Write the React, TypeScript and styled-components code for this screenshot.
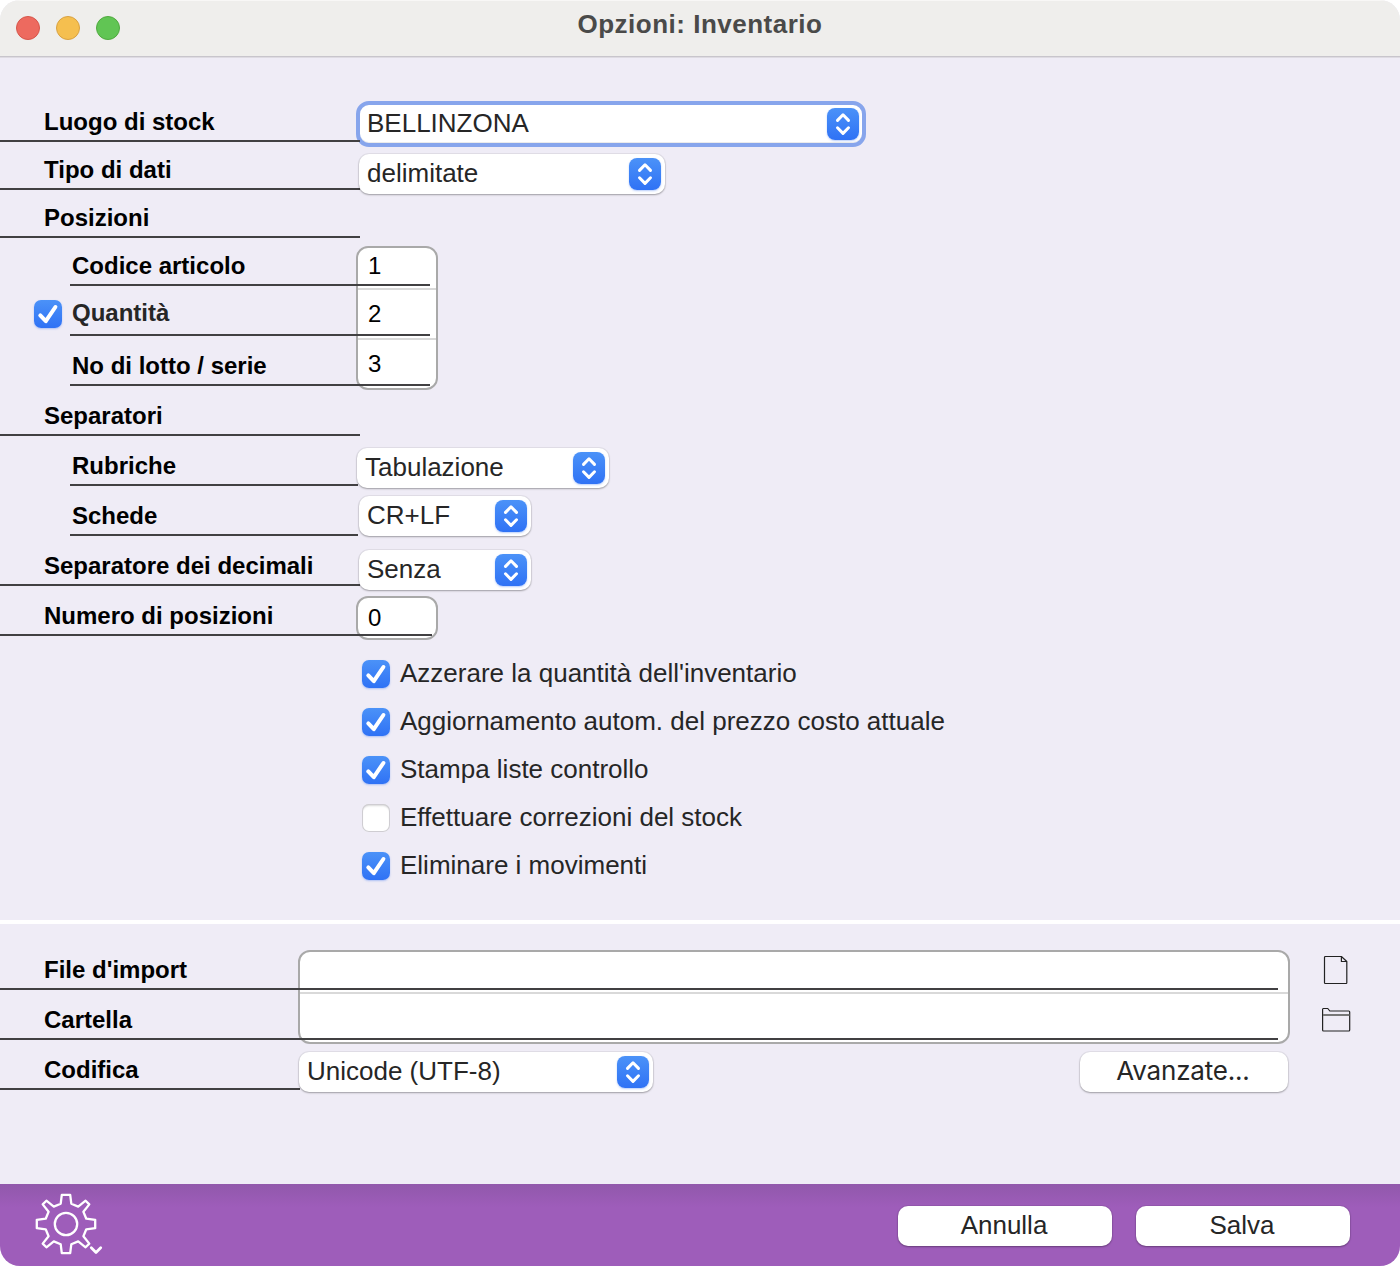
import React, { useState } from "react";
import styled, { createGlobalStyle, css } from "styled-components";

const sans = `"Liberation Sans", Arial, Helvetica, sans-serif`;
const system = `"Inter", "Liberation Sans", sans-serif`;
const line = "#414042";

const GlobalStyle = createGlobalStyle`
  *, *::before, *::after { box-sizing: border-box; }
  body { margin: 0; background: #fff; }
`;

const Window = styled.main`
  display: flex;
  flex-direction: column;
  width: 1400px;
  height: 1266px;
  border-radius: 20px;
  overflow: hidden;
  background: #efecf6;
  color: #262626;
  font-family: ${sans};
  font-size: 26px;
`;

const TitleBar = styled.header`
  display: grid;
  grid-template-columns: 140px 1fr 140px;
  flex: none;
  height: 58px;
  background: #efeeec;
  border-bottom: 1px solid #dedbe2;
  box-shadow: inset 0 1px 0 #f8f7f6, inset 0 -1px 0 #c8c5cc;
`;

const Lights = styled.div`
  display: flex;
  gap: 16px;
  padding: 16px 0 0 16px;
`;

const Light = styled.span<{ $fill: string; $edge: string }>`
  width: 24px;
  height: 24px;
  border-radius: 50%;
  background: ${(p) => p.$fill};
  border: 1px solid ${(p) => p.$edge};
`;

const Title = styled.h1`
  margin: 0;
  padding-top: 8px;
  text-align: center;
  font: 700 26px/32px ${sans};
  letter-spacing: 0.5px;
  color: #4a4a49;
`;

const Section = styled.section<{ $height: number; $labels: number }>`
  display: grid;
  grid-template-columns: ${(p) => p.$labels}px 1fr;
  flex: none;
  height: ${(p) => p.$height}px;
`;

const Labels = styled.div<{ $top: number }>`
  display: flex;
  flex-direction: column;
  padding-top: ${(p) => p.$top}px;
`;

/* The rule under a label may run on across the field beside it. */
const LabelRow = styled.div<{ $h: number; $indent?: boolean; $end: number; $lift?: number }>`
  position: relative;
  z-index: 1;
  display: flex;
  align-items: flex-end;
  flex: none;
  height: ${(p) => p.$h}px;
  padding: 0 0 ${(p) => 8 + (p.$lift ?? 0)}px ${(p) => (p.$indent ? 72 : 44)}px;
  font-weight: 700;
  font-size: 24px;
  line-height: 24px;
  color: ${(p) => (p.$lift ? "#262626" : "#000")};
  white-space: nowrap;
  pointer-events: none;

  &::after {
    content: "";
    position: absolute;
    bottom: 0;
    left: ${(p) => (p.$indent ? 70 : 0)}px;
    width: ${(p) => p.$end - (p.$indent ? 70 : 0)}px;
    height: 2px;
    background: ${line};
  }
`;

const CheckedLabel = styled.div`
  display: flex;
  align-items: flex-end;
  gap: 10px;
  margin-left: -38px;
  pointer-events: auto;

  & > button { margin: -1px 0 -3px; }
`;

const Controls = styled.div<{ $top: number }>`
  display: flex;
  flex-direction: column;
  align-items: flex-start;
  padding-top: ${(p) => p.$top}px;
`;

const raised = css`
  border: 0;
  border-radius: 10px;
  background: #fff;
  box-shadow: 0 0 0 1px rgba(0, 0, 0, 0.05), 0 1px 2px rgba(0, 0, 0, 0.3);
  color: #262626;
`;

const Popup = styled.button<{ $w: number; $gap?: number; $inset?: number; $focus?: boolean }>`
  ${raised}
  position: relative;
  z-index: 2;
  display: flex;
  align-items: center;
  justify-content: space-between;
  flex: none;
  width: ${(p) => p.$w}px;
  height: 40px;
  margin: ${(p) => p.$gap ?? 0}px 0 0 ${(p) => p.$inset ?? 0}px;
  padding: 0 4px 0 8px;
  font: 26px/38px ${sans};
  text-align: left;
  outline: none;
  ${(p) =>
    p.$focus &&
    css`
      z-index: 0;
      height: 46px;
      padding: 0 3px 0 7px;
      border: 4px solid #87a5ec;
      border-radius: 13px;
      box-shadow: inset 0 -1px 0 rgba(0, 0, 0, 0.08);
    `}
`;

const PopupText = styled.span`
  height: 40px;
`;

const Stepper = styled.span`
  display: grid;
  place-items: center;
  width: 32px;
  height: 32px;
  border-radius: 8px;
  background: linear-gradient(#4b92f8, #2f72f5);
  box-shadow: 0 1px 2px rgba(50, 110, 240, 0.35);
`;

const FieldGroup = styled.div<{ $w: number; $gap?: number }>`
  display: flex;
  flex-direction: column;
  flex: none;
  width: ${(p) => p.$w}px;
  margin-top: ${(p) => p.$gap ?? 0}px;
  border: 2px solid #a9a9a9;
  border-radius: 12px;
  background: #fff;
  overflow: hidden;
`;

const Field = styled.input<{ $h: number; $pad: number }>`
  width: 100%;
  height: ${(p) => p.$h}px;
  border: 0;
  padding: 0 10px ${(p) => p.$pad}px;
  background: transparent;
  font: 24px/28px ${sans};
  color: #000;
  outline: none;

  & + & { border-top: 2px solid #d9d9d9; }
`;

const CheckList = styled.div`
  display: flex;
  flex-direction: column;
  gap: 20px;
  margin: 20px 0 0 6px;
`;

const CheckRow = styled.label`
  display: flex;
  align-items: center;
  gap: 10px;
  height: 28px;
  white-space: nowrap;
`;

const CheckText = styled.span`
  height: 30px;
  line-height: 28px;
`;

const Box = styled.button<{ $on: boolean }>`
  display: grid;
  place-items: center;
  flex: none;
  width: 28px;
  height: 28px;
  padding: 0;
  border: 0;
  border-radius: 7px;
  background: ${(p) => (p.$on ? "linear-gradient(#4b92f8, #2f72f5)" : "#fff")};
  box-shadow: ${(p) =>
    p.$on
      ? "0 1px 2px rgba(50, 110, 240, 0.35)"
      : "inset 0 0 0 1px #cfcdd2, inset 0 2px 2px rgba(0, 0, 0, 0.15)"};
`;

const Divider = styled.div`
  flex: none;
  height: 4px;
  background: #fff;
`;

const ImportControls = styled.div`
  display: grid;
  grid-template-columns: 992px 1fr;
  align-content: start;
  padding-top: 26px;
`;

const FileButtons = styled.div`
  display: flex;
  flex-direction: column;
  align-items: center;
  gap: 22px;
  width: 92px;
  padding-top: 5px;
`;

const IconButton = styled.button`
  display: block;
  width: 32px;
  height: 30px;
  padding: 0;
  border: 0;
  background: none;

  svg { display: block; }
`;

const EncodingRow = styled.div`
  display: flex;
  justify-content: space-between;
  padding: 8px 2px 0 1px;
`;

const PushButton = styled.button<{ $w: number; $system?: boolean }>`
  ${raised}
  width: ${(p) => p.$w}px;
  height: 40px;
  padding: 0 0 2px;
  font: 26px/38px ${(p) => (p.$system ? system : sans)};
  letter-spacing: ${(p) => (p.$system ? "-0.2px" : "0")};
  text-indent: -2px;
`;

const Footer = styled.footer`
  display: flex;
  align-items: flex-start;
  gap: 24px;
  height: 82px;
  margin-top: auto;
  padding: 22px 50px 0 36px;
  background: linear-gradient(#9158ab, #9c5cb8 20px, #9e5dba 24px);
`;

const GearButton = styled.button`
  height: 62px;
  margin: -13px auto 0 -1px;
  padding: 0;
  border: 0;
  background: none;
`;

const Arrows = () => (
  <Stepper>
    <svg width="32" height="32" viewBox="0 0 32 32" fill="none" stroke="#fff" strokeWidth="3" strokeLinecap="round" strokeLinejoin="round">
      <path d="M10.5 12.4 16 6.8l5.5 5.6M10.5 19.8l5.5 5.6 5.5-5.6" />
    </svg>
  </Stepper>
);

function Select(props: { value: string; w: number; gap?: number; inset?: number; focus?: boolean }) {
  return (
    <Popup type="button" $w={props.w} $gap={props.gap} $inset={props.inset} $focus={props.focus}>
      <PopupText>{props.value}</PopupText>
      <Arrows />
    </Popup>
  );
}

function Check({ initial }: { initial: boolean }) {
  const [on, setOn] = useState(initial);
  return (
    <Box type="button" role="checkbox" aria-checked={on} $on={on} onClick={() => setOn(!on)}>
      {on && (
        <svg width="28" height="28" viewBox="0 0 28 28" fill="none" stroke="#fff" strokeWidth="4" strokeLinecap="round" strokeLinejoin="round">
          <path d="M6.3 15.4 11.8 21.2 21.4 7" />
        </svg>
      )}
    </Box>
  );
}

const options: [string, boolean][] = [
  ["Azzerare la quantità dell'inventario", true],
  ["Aggiornamento autom. del prezzo costo attuale", true],
  ["Stampa liste controllo", true],
  ["Effettuare correzioni del stock", false],
  ["Eliminare i movimenti", true],
];

export default function App() {
  return (
    <>
      <GlobalStyle />
      <Window>
        <TitleBar>
          <Lights>
            <Light $fill="#ed6a5f" $edge="#d6564b" />
            <Light $fill="#f5bf4f" $edge="#d8a142" />
            <Light $fill="#61c554" $edge="#50a93f" />
          </Lights>
          <Title>Opzioni: Inventario</Title>
        </TitleBar>

        <Section $height={862} $labels={356}>
          <Labels $top={36}>
            <LabelRow $h={48} $end={360}>Luogo di stock</LabelRow>
            <LabelRow $h={48} $end={360}>Tipo di dati</LabelRow>
            <LabelRow $h={48} $end={360}>Posizioni</LabelRow>
            <LabelRow $h={48} $end={430} $indent>Codice articolo</LabelRow>
            <LabelRow $h={50} $end={430} $indent $lift={3}>
              <CheckedLabel>
                <Check initial />
                Quantità
              </CheckedLabel>
            </LabelRow>
            <LabelRow $h={50} $end={430} $indent>No di lotto / serie</LabelRow>
            <LabelRow $h={50} $end={360}>Separatori</LabelRow>
            <LabelRow $h={50} $end={358} $indent>Rubriche</LabelRow>
            <LabelRow $h={50} $end={358} $indent>Schede</LabelRow>
            <LabelRow $h={50} $end={360}>Separatore dei decimali</LabelRow>
            <LabelRow $h={50} $end={432}>Numero di posizioni</LabelRow>
          </Labels>
          <Controls $top={43}>
            <Select value="BELLINZONA" w={510} focus />
            <Select value="delimitate" w={306} gap={7} inset={3} />
            <FieldGroup $w={82} $gap={52}>
              <Field $h={40} $pad={4} defaultValue="1" />
              <Field $h={50} $pad={1} defaultValue="2" />
              <Field $h={50} $pad={1} defaultValue="3" />
            </FieldGroup>
            <Select value="Tabulazione" w={252} gap={58} inset={1} />
            <Select value="CR+LF" w={172} gap={8} inset={3} />
            <Select value="Senza" w={172} gap={14} inset={3} />
            <FieldGroup $w={82} $gap={6}>
              <Field $h={40} $pad={0} defaultValue="0" />
            </FieldGroup>
            <CheckList>
              {options.map(([text, on]) => (
                <CheckRow key={text}>
                  <Check initial={on} />
                  <CheckText>{text}</CheckText>
                </CheckRow>
              ))}
            </CheckList>
          </Controls>
        </Section>

        <Divider />

        <Section $height={260} $labels={298}>
          <Labels $top={16}>
            <LabelRow $h={50} $end={1278}>File d'import</LabelRow>
            <LabelRow $h={50} $end={1278}>Cartella</LabelRow>
            <LabelRow $h={50} $end={300}>Codifica</LabelRow>
          </Labels>
          <ImportControls>
            <FieldGroup $w={992}>
              <Field $h={40} $pad={0} />
              <Field $h={50} $pad={0} />
            </FieldGroup>
            <FileButtons>
              <IconButton type="button" aria-label="File">
                <svg width="32" height="30" viewBox="0 0 32 30" fill="none" stroke="#222" strokeWidth="1.2" strokeLinejoin="round">
                  <path d="M5.4 1.5h16l5.4 5v21.2a.8.8 0 0 1-.8.8H5.3a.8.8 0 0 1-.8-.8V2.4a.9.9 0 0 1 .9-.9ZM21.4 1.5v5h5.4" />
                </svg>
              </IconButton>
              <IconButton type="button" aria-label="Cartella">
                <svg width="32" height="30" viewBox="0 0 32 30" fill="none" stroke="#222" strokeWidth="1.2" strokeLinejoin="round">
                  <path d="M3.3 1.5h4.5l2 2.5h19a.9.9 0 0 1 .9.9v18.2a.9.9 0 0 1-.9.9H3.5a.9.9 0 0 1-.9-.9V2.3a.8.8 0 0 1 .7-.8Z" />
                  <path d="M3 8h26.4" stroke="#777" strokeWidth="2" />
                </svg>
              </IconButton>
            </FileButtons>
            <EncodingRow>
              <Select value="Unicode (UTF-8)" w={354} />
              <PushButton type="button" $w={208} $system>Avanzate...</PushButton>
            </EncodingRow>
          </ImportControls>
        </Section>

        <Footer>
          <GearButton type="button" aria-label="Impostazioni">
            <svg width="68" height="62" viewBox="-31 -31 68 62" fill="none" stroke="#fff" strokeWidth="2.3" strokeLinejoin="round">
              <path d="M-4.2-29.2H4.2L5.3-20.3 12.2-17.4 19.6-23.3 23.3-19.6 17.4-12.2 20.3-5.3 29.2-4.2V4.2L20.3 5.3 17.4 12.2 23.3 19.6 19.6 23.3 12.2 17.4 5.3 20.3 4.2 29.2H-4.2L-5.3 20.3-12.2 17.4-19.6 23.3-23.3 19.6-17.4 12.2-20.3 5.3-29.2 4.2V-4.2L-20.3-5.3-17.4-12.2-23.3-19.6-19.6-23.3-12.2-17.4-5.3-20.3Z" />
              <circle r="11.2" />
              <path d="M25.3 23.8 30 28.4 34.7 23.8" strokeWidth="2.8" strokeLinecap="round" />
            </svg>
          </GearButton>
          <PushButton type="button" $w={214}>Annulla</PushButton>
          <PushButton type="button" $w={214}>Salva</PushButton>
        </Footer>
      </Window>
    </>
  );
}
